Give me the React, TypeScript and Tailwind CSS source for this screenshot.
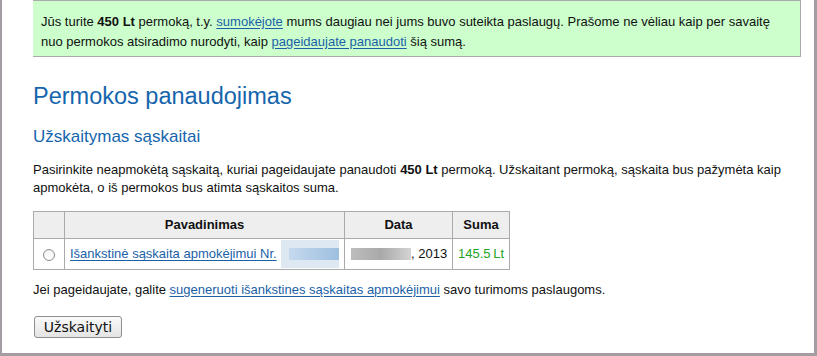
import React from "react"

const linkCls = "text-[#1a5fa8] underline underline-offset-2"

export default function App() {
  return (
    <div className="w-[817px] h-[356px] bg-white border-l-2 border-r-[3px] border-b-[3px] border-[#a39ca3] pl-[31px] pr-[13px] text-[13px] text-[#111] font-['Liberation_Sans',Arial,sans-serif] overflow-hidden">
      {/* Notice */}
      <div className="bg-[#ccffcc] border-t border-r border-b border-[#aaaaaa] pl-[8px] pr-2 pt-[11px] pb-[4px] leading-[20px]">
        Jūs turite <b>450 Lt</b> permoką, t.y. <a href="#" className={linkCls}>sumokėjote</a> mums daugiau nei jums buvo suteikta paslaugų. Prašome ne vėliau kaip per savaitę
        <br />
        nuo permokos atsiradimo nurodyti, kaip <a href="#" className={linkCls}>pageidaujate panaudoti</a> šią sumą.
      </div>

      <h1 className="mt-[25px] text-[23.5px] leading-[28px] text-[#1565ad]">Permokos panaudojimas</h1>
      <h2 className="mt-[16px] text-[17px] leading-[22px] text-[#1565ad]">Užskaitymas sąskaitai</h2>

      <p className="mt-[13px] leading-[18px]">
        Pasirinkite neapmokėtą sąskaitą, kuriai pageidaujate panaudoti <b>450 Lt</b> permoką. Užskaitant permoką, sąskaita bus pažymėta kaip
        <br />
        apmokėta, o iš permokos bus atimta sąskaitos suma.
      </p>

      <table className="mt-[14px] w-[476px] table-fixed border-collapse border border-[#aaaaaa]">
        <colgroup>
          <col className="w-[31px]" />
          <col className="w-[280px]" />
          <col className="w-[108px]" />
          <col className="w-[57px]" />
        </colgroup>
        <thead>
          <tr className="bg-[#eeeeee] h-[27px]">
            <th className="border border-[#aaaaaa]"></th>
            <th className="border border-[#aaaaaa] font-bold">Pavadinimas</th>
            <th className="border border-[#aaaaaa] font-bold">Data</th>
            <th className="border border-[#aaaaaa] font-bold">Suma</th>
          </tr>
        </thead>
        <tbody>
          <tr className="h-[31px]">
            <td className="border border-[#aaaaaa] text-center">
              <span className="inline-block w-[12px] h-[12px] rounded-full border border-[#8a8a8a] bg-gradient-to-b from-[#f4f4f4] to-white align-middle"></span>
            </td>
            <td className="border border-[#aaaaaa] pl-[5px] pr-0 whitespace-nowrap">
              <div className="flex items-center">
                <a href="#" className={linkCls}>Išankstinė sąskaita apmokėjimui Nr.</a>
                <span className="ml-[4px] w-[58px] h-[28px] bg-[#dde8f3] flex items-center pl-[8px]">
                  <span className="w-[50px] h-[12px] bg-gradient-to-r from-[#c4d9ee] via-[#b2cce6] to-[#9dbfe0]"></span>
                </span>
              </div>
            </td>
            <td className="border border-[#aaaaaa] pl-[6px] pr-[4px] whitespace-nowrap">
              <div className="flex items-center">
                <span className="w-[60px] h-[12px] bg-gradient-to-r from-[#bdbdbd] via-[#a9a9a9] to-[#d4d4d4]"></span>
                <span>, 2013</span>
              </div>
            </td>
            <td className="border border-[#aaaaaa] pl-[5px] pr-0 text-[#22a322] whitespace-nowrap">145.5{"\u2009"}Lt</td>
          </tr>
        </tbody>
      </table>

      <p className="mt-[11px] leading-[18px]">
        Jei pageidaujate, galite <a href="#" className={linkCls}>sugeneruoti išankstines sąskaitas apmokėjimui</a> savo turimoms paslaugoms.
      </p>

      <button className="mt-[17px] ml-[1px] w-[88px] h-[22px] rounded-[3px] border border-[#8f8f8f] bg-gradient-to-b from-[#fafafa] to-[#e4e4e4] text-[14px] font-['DejaVu_Sans',sans-serif] text-[#111] leading-none">
        Užskaityti
      </button>
    </div>
  )
}
